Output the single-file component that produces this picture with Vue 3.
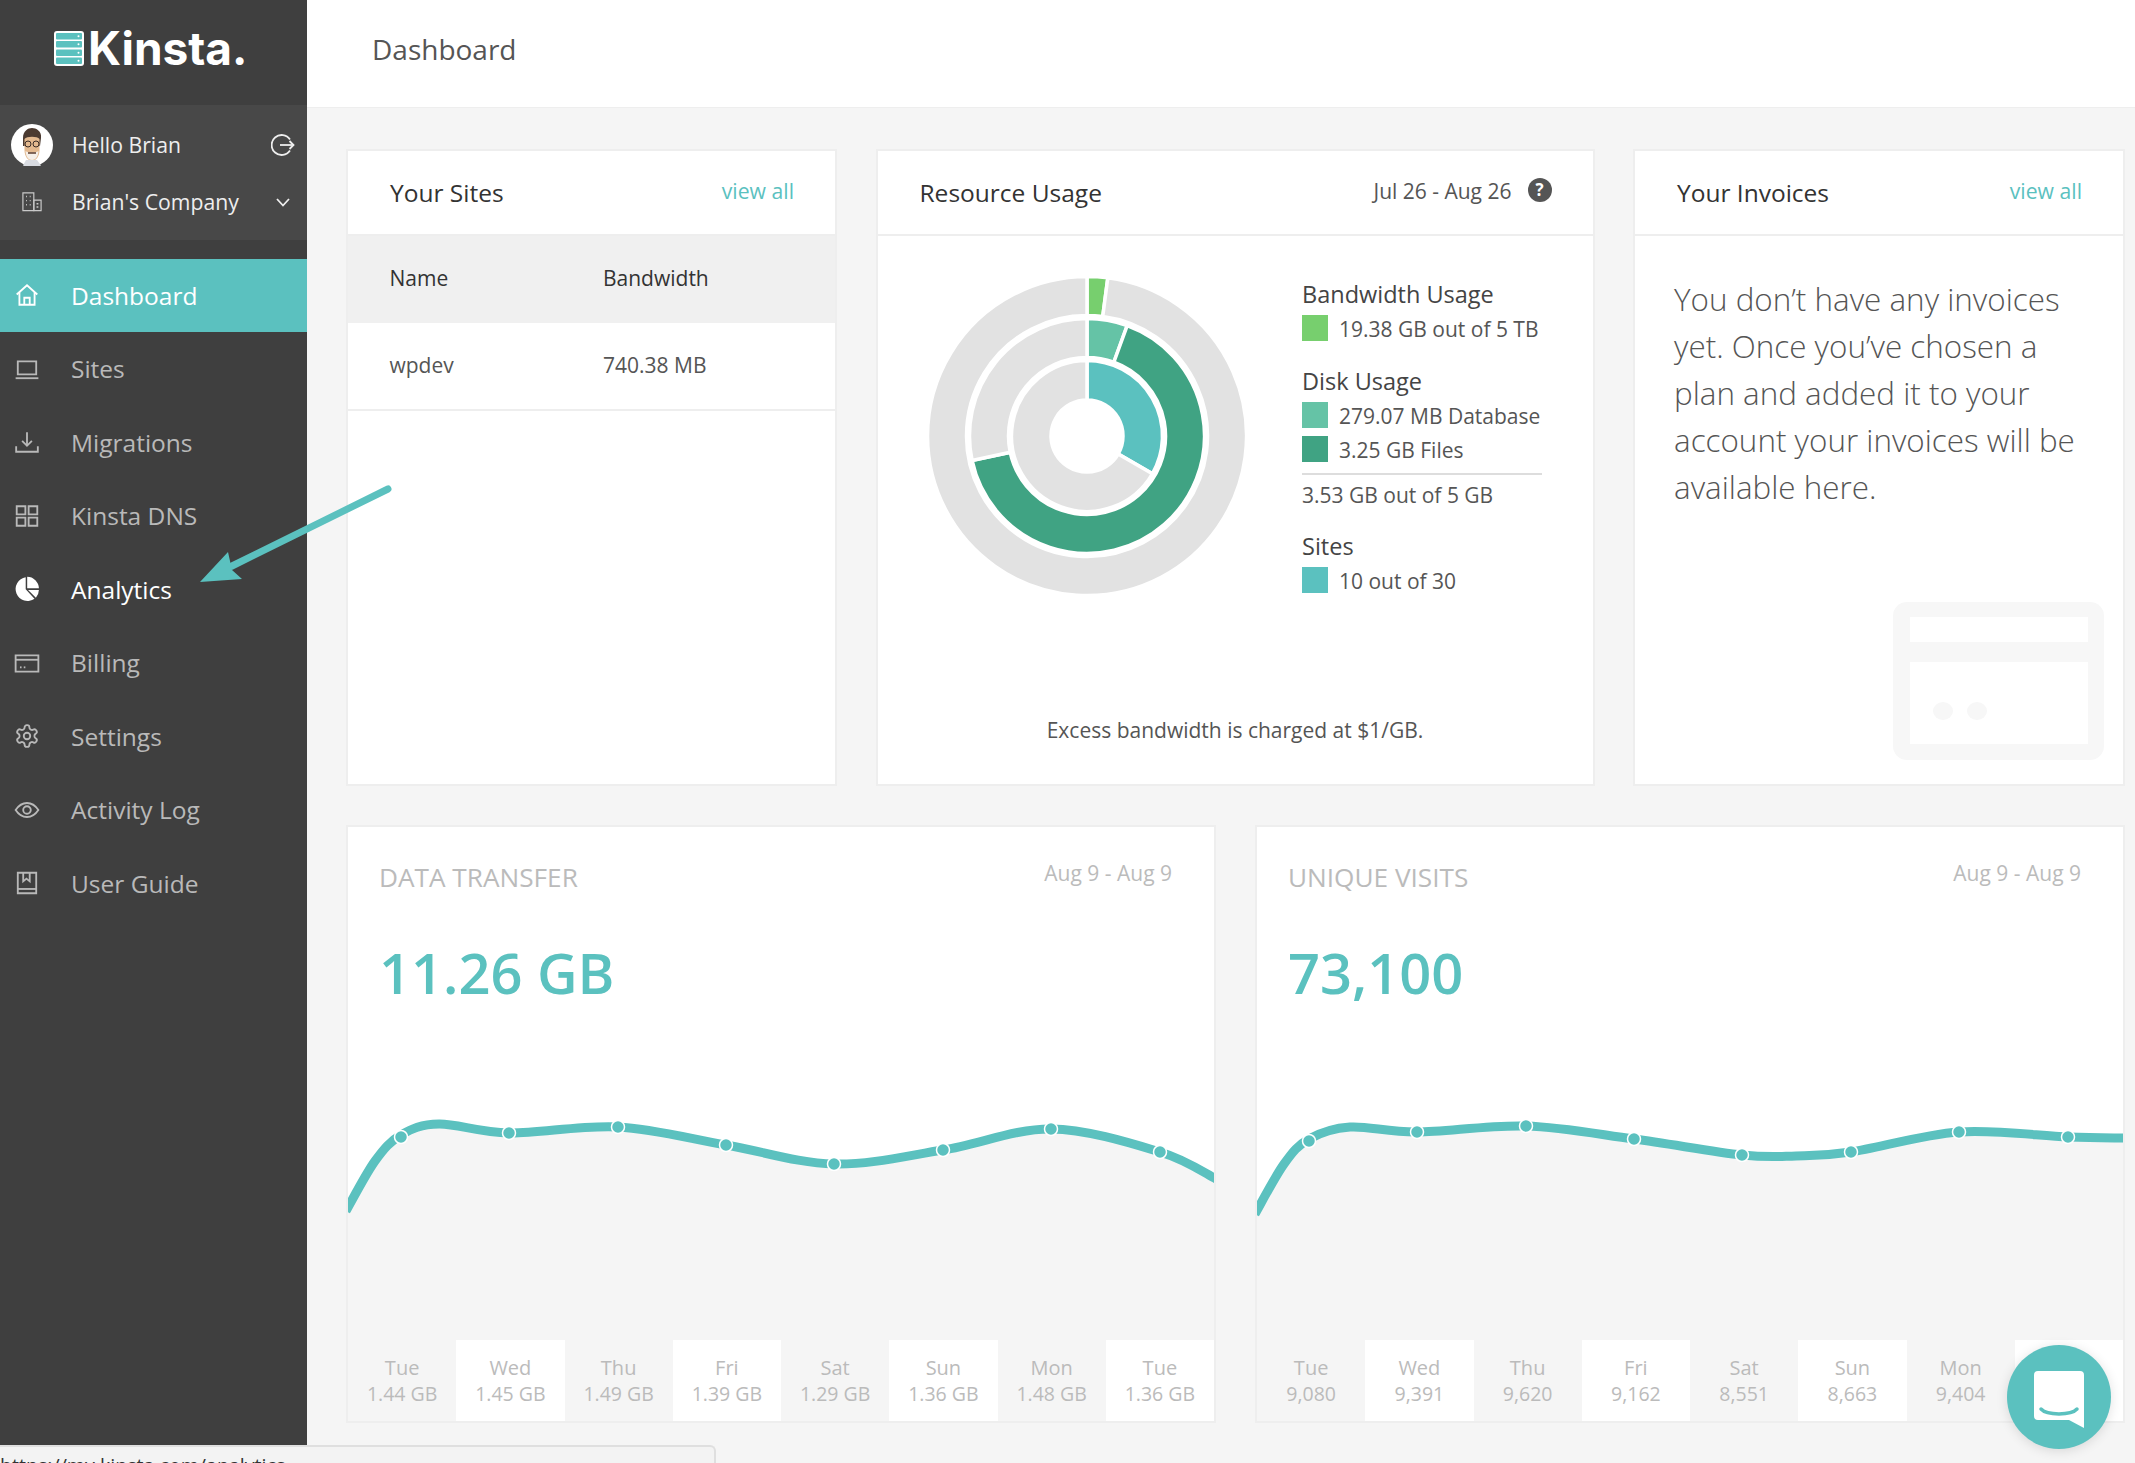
<script setup>
const navItems = [
  { label: 'Dashboard', active: true, paths: ['M2.5 11.5 12 3l9.5 8.5', 'M5 9.5V21h14V9.5', 'M9.5 21v-6.5h5V21'] },
  { label: 'Sites', paths: ['M3.5 5h17v12h-17z', 'M1.5 20.5h21'] },
  { label: 'Migrations', paths: ['M12 3v12', 'M7.5 11l4.5 4.5 4.5-4.5', 'M2 16v5h20v-5'] },
  { label: 'Kinsta DNS', paths: ['M2.5 3h8v7.5h-8z', 'M13.5 3h8v7.5h-8z', 'M2.5 13.5h8V21h-8z', 'M13.5 13.5h8V21h-8z'] },
  { label: 'Analytics', bright: true, solid: true, paths: ['M10.8 12.2V1.2A11 11 0 1 0 18.9 21L10.8 12.2z', 'M12.2 0.8A11 11 0 0 1 23 11.2H12.2z', 'M13 13h10A11 11 0 0 1 20.2 20z'] },
  { label: 'Billing', paths: ['M1.5 5h21v15h-21z', 'M1.5 9h21', 'M5.5 16h1.5', 'M9 16h1.5'] },
  { label: 'Settings', paths: ['M12.22 2h-.44a2 2 0 0 0-2 2v.18a2 2 0 0 1-1 1.73l-.43.25a2 2 0 0 1-2 0l-.15-.08a2 2 0 0 0-2.73.73l-.22.38a2 2 0 0 0 .73 2.73l.15.1a2 2 0 0 1 1 1.72v.51a2 2 0 0 1-1 1.74l-.15.09a2 2 0 0 0-.73 2.73l.22.38a2 2 0 0 0 2.73.73l.15-.08a2 2 0 0 1 2 0l.43.25a2 2 0 0 1 1 1.73V20a2 2 0 0 0 2 2h.44a2 2 0 0 0 2-2v-.18a2 2 0 0 1 1-1.73l.43-.25a2 2 0 0 1 2 0l.15.08a2 2 0 0 0 2.73-.73l.22-.39a2 2 0 0 0-.73-2.73l-.15-.08a2 2 0 0 1-1-1.74v-.5a2 2 0 0 1 1-1.74l.15-.09a2 2 0 0 0 .73-2.73l-.22-.38a2 2 0 0 0-2.73-.73l-.15.08a2 2 0 0 1-2 0l-.43-.25a2 2 0 0 1-1-1.73V4a2 2 0 0 0-2-2z', 'M15 12a3 3 0 1 1-6 0 3 3 0 0 1 6 0z'] },
  { label: 'Activity Log', paths: ['M1.5 12C4.5 7.5 8 5.5 12 5.5s7.5 2 10.5 6.5c-3 4.5-6.5 6.5-10.5 6.5S4.5 16.5 1.5 12z', 'M15.5 12a3.5 3.5 0 1 1-7 0 3.5 3.5 0 0 1 7 0z'] },
  { label: 'User Guide', paths: ['M3.5 2.5h17v19h-17z', 'M3.5 17.5h17', 'M8.5 2.5v8l3-2.5 3 2.5v-8'] },
]

// donut rings, angles in degrees clockwise from the top
const polar = (r, deg) => {
  const a = ((deg - 90) * Math.PI) / 180
  return `${(160 + r * Math.cos(a)).toFixed(2)} ${(160 + r * Math.sin(a)).toFixed(2)}`
}
const arc = (r0, r1, from, to) => {
  const large = to - from > 180 ? 1 : 0
  return `M${polar(r1, from)}A${r1} ${r1} 0 ${large} 1 ${polar(r1, to)}L${polar(r0, to)}A${r0} ${r0} 0 ${large} 0 ${polar(r0, from)}Z`
}
const donut = [
  { d: arc(120.5, 159.5, 0, 7.5), fill: '#77cf6e' },
  { d: arc(120.5, 159.5, 7.5, 360), fill: '#e2e2e2' },
  { d: arc(78.5, 117.5, 0, 20), fill: '#65c3a6' },
  { d: arc(78.5, 117.5, 20, 258), fill: '#40a383' },
  { d: arc(78.5, 117.5, 258, 360), fill: '#e2e2e2' },
  { d: arc(36, 75.5, 0, 120), fill: '#5bc1bf' },
  { d: arc(36, 75.5, 120, 360), fill: '#e2e2e2' },
]

// smooth line through the points (catmull-rom to bezier)
const spline = (pts) => {
  let d = `M${pts[0][0]} ${pts[0][1]}`
  for (let i = 0; i < pts.length - 1; i++) {
    const p0 = pts[i - 1] || pts[i]
    const p1 = pts[i]
    const p2 = pts[i + 1]
    const p3 = pts[i + 2] || p2
    const c1x = p1[0] + (p2[0] - p0[0]) / 6
    const c1y = p1[1] + (p2[1] - p0[1]) / 6
    const c2x = p2[0] - (p3[0] - p1[0]) / 6
    const c2y = p2[1] - (p3[1] - p1[1]) / 6
    d += `C${c1x.toFixed(1)} ${c1y.toFixed(1)} ${c2x.toFixed(1)} ${c2y.toFixed(1)} ${p2[0]} ${p2[1]}`
  }
  return d
}

const makeChart = (title, value, left, pts, dots, cells) => {
  const shift = pts.map(([x, y]) => [x - left, y - 1100])
  const line = spline(shift)
  return {
    title,
    value,
    line,
    area: `${line}L866 240L0 240Z`,
    dots: dots.map(([x, y]) => [x - left, y - 1100]),
    cells,
  }
}

const charts = [
  makeChart(
    'DATA TRANSFER',
    '11.26 GB',
    348,
    [[346, 1211], [375, 1161], [401, 1135], [439, 1124], [509, 1133], [618, 1127], [726, 1145], [834, 1164], [943, 1150], [1051, 1129], [1160, 1152], [1216, 1179]],
    [[401, 1137], [509, 1133], [618, 1127], [726, 1145], [834, 1164], [943, 1150], [1051, 1129], [1160, 1152]],
    [['Tue', '1.44 GB'], ['Wed', '1.45 GB'], ['Thu', '1.49 GB'], ['Fri', '1.39 GB'], ['Sat', '1.29 GB'], ['Sun', '1.36 GB'], ['Mon', '1.48 GB'], ['Tue', '1.36 GB']],
  ),
  makeChart(
    'UNIQUE VISITS',
    '73,100',
    1258,
    [[1256, 1214], [1285, 1164], [1310, 1139], [1351, 1127], [1418, 1132], [1527, 1126], [1635, 1139], [1743, 1155], [1797, 1156], [1852, 1152], [1960, 1132], [2069, 1137], [2126, 1138]],
    [[1310, 1141], [1418, 1132], [1527, 1126], [1635, 1139], [1743, 1155], [1852, 1152], [1960, 1132], [2069, 1137]],
    [['Tue', '9,080'], ['Wed', '9,391'], ['Thu', '9,620'], ['Fri', '9,162'], ['Sat', '8,551'], ['Sun', '8,663'], ['Mon', '9,404'], ['', '']],
  ),
]
</script>

<template>
  <div class="page">
    <aside class="sidebar">
      <div class="logo">
        <svg class="logo-mark" viewBox="0 0 30 35" width="30" height="35">
          <rect width="30" height="35" rx="3" fill="#fff" />
          <g fill="#5bc1bf">
            <rect x="2" y="2" width="26" height="6.5" rx="1" />
            <rect x="2" y="10" width="26" height="6.5" rx="1" />
            <rect x="2" y="18.5" width="26" height="6.5" rx="1" />
            <rect x="2" y="26.5" width="26" height="6.5" rx="1" />
          </g>
          <g fill="#fff">
            <circle cx="24.5" cy="5.2" r="1" />
            <circle cx="24.5" cy="13.2" r="1" />
            <circle cx="24.5" cy="21.7" r="1" />
            <circle cx="24.5" cy="29.7" r="1" />
          </g>
        </svg>
        <span class="logo-word">Kinsta.</span>
      </div>

      <div class="user-panel">
        <div class="user-row">
          <svg class="avatar" viewBox="0 0 42 42" width="42" height="42">
            <circle cx="21" cy="21" r="21" fill="#fff" />
            <path d="M12 14c0-7 5-10 9-10s10 3 9 10l-1 8-17 0z" fill="#4b3a30" />
            <path d="M13.5 15c2-3 13-3 15 0v11c0 7-4 11-7.5 11s-7.5-4-7.5-11z" fill="#e3b98f" />
            <path d="M14.5 27c3 2 10 2 13 0-.5 6-3 9-6.5 9s-6-3-6.5-9z" fill="#f5efe8" />
            <path d="M17 29h8" stroke="#5a3d30" stroke-width="1.5" />
            <g fill="none" stroke="#3a2c26" stroke-width="1">
              <circle cx="17" cy="20" r="3" />
              <circle cx="25" cy="20" r="3" />
            </g>
            <path d="M15 36l-3 5.5a21 21 0 0 0 18 0l-4-5.5z" fill="#d9dce2" />
          </svg>
          <span class="user-name">Hello Brian</span>
          <svg class="user-end" viewBox="0 0 24 24" width="24" height="24" fill="none" stroke="#eee" stroke-width="1.8">
            <path d="M19 6.5A10 10 0 1 0 19 17.5" />
            <path d="M9 12h13.5" />
            <path d="M18.5 8l4 4-4 4" />
          </svg>
        </div>
        <div class="user-row company">
          <svg class="building" viewBox="0 0 22 22" width="20" height="20" fill="none" stroke="#c9c9c9" stroke-width="1.3">
            <path d="M1 1h12v19.5H1z" />
            <path d="M13 9h8v11.5h-8z" />
            <path d="M4.5 5h1M8.5 5h1M4.5 9.5h1M8.5 9.5h1M4.5 14h1M8.5 14h1M16 13h2M16 16.5h2" stroke-width="1.6" />
          </svg>
          <span class="user-name">Brian's Company</span>
          <svg class="user-end" viewBox="0 0 24 24" width="24" height="24" fill="none" stroke="#eee" stroke-width="1.8">
            <path d="M6 9l6 6.5 6-6.5" />
          </svg>
        </div>
      </div>

      <nav class="nav">
        <a
          v-for="item in navItems"
          :key="item.label"
          class="nav-item"
          :class="{ active: item.active, bright: item.bright }"
        >
          <svg class="nav-icon" viewBox="0 0 24 24" width="26" height="26">
            <path
              v-for="d in item.paths"
              :key="d"
              :d="d"
              :fill="item.solid ? 'currentColor' : 'none'"
              :stroke="item.solid ? 'none' : 'currentColor'"
              stroke-width="1.7"
            />
          </svg>
          <span>{{ item.label }}</span>
        </a>
      </nav>
    </aside>

    <main class="main">
      <header class="topbar">Dashboard</header>

      <div class="content">
        <div class="row-top">
          <section class="card">
            <div class="card-head">
              <h2>Your Sites</h2>
              <a class="link">view all</a>
            </div>
            <div class="table-row table-head">
              <span>Name</span>
              <span>Bandwidth</span>
            </div>
            <div class="table-row table-body">
              <span>wpdev</span>
              <span>740.38 MB</span>
            </div>
          </section>

          <section class="card">
            <div class="card-head">
              <h2>Resource Usage</h2>
              <div class="head-right">
                <span class="range">Jul 26 - Aug 26</span>
                <span class="help">?</span>
              </div>
            </div>
            <div class="usage">
              <svg class="donut" viewBox="0 0 320 320" width="320" height="320">
                <path v-for="seg in donut" :key="seg.d" :d="seg.d" :fill="seg.fill" stroke="#fff" stroke-width="3.5" />
              </svg>
              <div class="legend">
                <h3>Bandwidth Usage</h3>
                <div class="legend-row"><i class="swatch c-lime"></i>19.38 GB out of 5 TB</div>
                <h3 class="gap">Disk Usage</h3>
                <div class="legend-row"><i class="swatch c-mint"></i>279.07 MB Database</div>
                <div class="legend-row next"><i class="swatch c-green"></i>3.25 GB Files</div>
                <div class="legend-total">3.53 GB out of 5 GB</div>
                <h3 class="gap-sites">Sites</h3>
                <div class="legend-row"><i class="swatch c-teal"></i>10 out of 30</div>
              </div>
            </div>
            <p class="excess">Excess bandwidth is charged at $1/GB.</p>
          </section>

          <section class="card">
            <div class="card-head">
              <h2>Your Invoices</h2>
              <a class="link">view all</a>
            </div>
            <p class="invoice-text">You don’t have any invoices yet. Once you’ve chosen a plan and added it to your account your invoices will be available here.</p>
            <svg class="ghost" viewBox="0 0 211 158" width="211" height="158">
              <rect width="211" height="158" rx="14" fill="#f7f7f7" />
              <rect x="17" y="15" width="178" height="25" fill="#fff" />
              <rect x="17" y="60" width="178" height="82" fill="#fff" />
              <ellipse cx="50" cy="109" rx="10" ry="9" fill="#f7f7f7" />
              <ellipse cx="84" cy="109" rx="10" ry="9" fill="#f7f7f7" />
            </svg>
          </section>
        </div>

        <div class="row-bottom">
          <section v-for="chart in charts" :key="chart.title" class="card chart-card">
            <div class="chart-head">
              <h2>{{ chart.title }}</h2>
              <span>Aug 9 - Aug 9</span>
            </div>
            <div class="chart-value">{{ chart.value }}</div>
            <svg class="chart-line" viewBox="0 0 866 240" preserveAspectRatio="none">
              <path :d="chart.area" fill="#f5f5f5" />
              <path :d="chart.line" fill="none" stroke="#5bc1bf" stroke-width="9" />
              <circle
                v-for="dot in chart.dots"
                :key="dot[0]"
                :cx="dot[0]"
                :cy="dot[1]"
                r="6.5"
                fill="#5bc1bf"
                stroke="#fff"
                stroke-width="1.5"
              />
            </svg>
            <div class="chart-cells">
              <div v-for="(cell, i) in chart.cells" :key="i" class="cell">
                <span>{{ cell[0] }}</span>
                <span class="cell-value">{{ cell[1] }}</span>
              </div>
            </div>
          </section>
        </div>
      </div>
    </main>

    <svg class="arrow" viewBox="0 0 200 110" width="200" height="110">
      <path d="M193 9 37 86" stroke="#5bc1bf" stroke-width="7" stroke-linecap="round" fill="none" />
      <path d="M5 102 33 72l4 18 10 9z" fill="#5bc1bf" />
    </svg>

    <div class="chat">
      <svg viewBox="0 0 50 57" width="50" height="57">
        <path d="M4 0h42a4 4 0 0 1 4 4v53L35 49H4a4 4 0 0 1-4-4V4a4 4 0 0 1 4-4z" fill="#fff" />
        <path d="M7 38c6 6.5 30 6.5 36 0" fill="none" stroke="#5bc1bf" stroke-width="3.5" stroke-linecap="round" />
      </svg>
    </div>

    <div class="status-bar">https://my.kinsta.com/analytics</div>
  </div>
</template>

<style>
html,
body {
  margin: 0;
  background: #f5f5f5;
}
</style>

<style scoped>
* {
  box-sizing: border-box;
}

.page {
  position: relative;
  display: flex;
  width: 2135px;
  height: 1463px;
  overflow: hidden;
  background: #f5f5f5;
  font-family: 'Open Sans', 'Liberation Sans', sans-serif;
  color: #555;
}

/* sidebar */
.sidebar {
  width: 307px;
  height: 1445px;
  flex-shrink: 0;
  background: #3f3f3f;
}

.logo {
  display: flex;
  align-items: center;
  height: 105px;
  padding: 0 0 9px 54px;
  gap: 4px;
}

.logo-word {
  font-family: Inter, 'Open Sans', sans-serif;
  font-size: 46px;
  font-weight: 700;
  letter-spacing: 0;
  color: #fff;
  line-height: 1;
}

.user-panel {
  height: 135px;
  padding-top: 11px;
  background: #484848;
}

.user-row {
  position: relative;
  display: flex;
  align-items: center;
  height: 57px;
  padding-left: 11px;
}

.company {
  padding-left: 22px;
}

.avatar {
  flex-shrink: 0;
  margin-right: 19px;
}

.building {
  flex-shrink: 0;
  margin-right: 30px;
}

.user-name {
  font-size: 21.2px;
  color: #eee;
}

.user-end {
  position: absolute;
  right: 12px;
  top: 17px;
}

.nav {
  margin-top: 18.5px;
}

.nav-item {
  display: flex;
  align-items: center;
  height: 73.5px;
  padding-left: 14px;
  font-size: 24.5px;
  color: #b9b9b9;
}

.nav-icon {
  margin-right: 31px;
  flex-shrink: 0;
}

.nav-item.active {
  background: #5bc1bf;
  color: #fff;
}

.nav-item.bright {
  color: #fff;
}

/* main */
.main {
  flex: 1;
  min-width: 0;
}

.topbar {
  display: flex;
  align-items: center;
  height: 108px;
  padding-left: 65px;
  padding-bottom: 10px;
  background: #fff;
  border-bottom: 1px solid #eee;
  font-size: 28px;
  color: #555;
}

.content {
  padding: 41px 10px 0 39px;
}

.row-top {
  display: grid;
  grid-template-columns: 491px 719px 492px;
  gap: 38.5px;
  height: 637px;
}

.row-bottom {
  display: grid;
  grid-template-columns: 870px 870px;
  gap: 39px;
  height: 598px;
  margin-top: 39px;
}

.card {
  position: relative;
  display: flex;
  flex-direction: column;
  background: #fff;
  border: 2px solid #eee;
  min-width: 0;
}

.card-head {
  display: flex;
  justify-content: space-between;
  align-items: center;
  height: 85px;
  padding: 0 41px 0 42px;
  border-bottom: 2px solid #eee;
  flex-shrink: 0;
}

.card-head h2 {
  margin: 0;
  font-size: 24.5px;
  font-weight: 400;
  color: #333;
}

.link {
  font-size: 21.2px;
  color: #5bc1bf;
  margin-top: -4px;
}

.table-row {
  display: grid;
  grid-template-columns: 213.5px 1fr;
  align-items: center;
  padding: 0 0 3px 41.5px;
  font-size: 21px;
}

.table-head {
  height: 87px;
  background: #f0f0f0;
  color: #333;
}

.table-body {
  height: 88px;
  border-bottom: 2px solid #eee;
  color: #555;
}

/* resource usage */
.head-right {
  display: flex;
  align-items: center;
  gap: 16px;
}

.range {
  margin-top: -3px;
  font-size: 21px;
  color: #555;
}

.help {
  display: flex;
  align-items: center;
  justify-content: center;
  width: 24px;
  height: 24px;
  margin-top: -6px;
  border-radius: 50%;
  background: #555;
  color: #fff;
  font-size: 17px;
  font-weight: 700;
}

.usage {
  display: flex;
  align-items: flex-start;
  padding: 40px 0 0 49.5px;
  gap: 55px;
}

.donut {
  flex-shrink: 0;
}

.legend {
  width: 240px;
  padding-top: 4px;
  font-size: 21px;
}

.legend h3 {
  margin: 0;
  height: 28px;
  line-height: 28px;
  font-size: 23.5px;
  font-weight: 400;
  color: #444;
}

.legend h3.gap {
  margin-top: 26px;
}

.legend h3.gap-sites {
  margin-top: 22.5px;
}

.legend-row {
  display: flex;
  align-items: flex-start;
  gap: 11px;
  height: 26px;
  margin-top: 7px;
  line-height: 28px;
  white-space: nowrap;
}

.legend-row.next {
  margin-top: 8px;
}

.swatch {
  width: 26px;
  height: 26px;
  flex-shrink: 0;
}

.c-lime {
  background: #77cf6e;
}

.c-mint {
  background: #65c3a6;
}

.c-green {
  background: #40a383;
}

.c-teal {
  background: #5bc1bf;
}

.legend-total {
  margin-top: 11px;
  padding-top: 6px;
  line-height: 28px;
  border-top: 2px solid #ddd;
}

.excess {
  margin: auto 0 0;
  padding-bottom: 40px;
  text-align: center;
  font-size: 21px;
  line-height: 28px;
}

/* invoices */
.invoice-text {
  margin: 0;
  padding: 39px 30px 0 39px;
  font-size: 31.4px;
  font-weight: 300;
  line-height: 47px;
  color: #555;
}

.ghost {
  position: absolute;
  right: 19px;
  bottom: 24px;
}

/* charts */
.chart-card {
  overflow: hidden;
}

.chart-head {
  display: flex;
  justify-content: space-between;
  align-items: flex-start;
  padding: 32px 42px 0 31px;
}

.chart-head h2 {
  margin: 0;
  font-size: 26.2px;
  font-weight: 400;
  line-height: 36px;
  color: #bbb;
}

.chart-head span {
  font-size: 21px;
  line-height: 28px;
  color: #bbb;
}

.chart-value {
  padding: 42px 0 0 31px;
  font-size: 56px;
  font-weight: 600;
  line-height: 70px;
  color: #5bc1bf;
}

.chart-line {
  display: block;
  width: 100%;
  height: 240px;
  margin-top: auto;
  flex-shrink: 0;
}

.chart-cells {
  display: grid;
  grid-template-columns: repeat(8, 1fr);
  height: 81px;
  flex-shrink: 0;
  background: #f5f5f5;
}

.cell {
  display: flex;
  flex-direction: column;
  align-items: center;
  padding-top: 15px;
  font-size: 20px;
  line-height: 26px;
  color: #bbb;
}

.cell-value {
  font-size: 19.5px;
}

.cell:nth-child(even) {
  background: #fff;
}

/* overlays */
.arrow {
  position: absolute;
  left: 195px;
  top: 480px;
}

.chat {
  position: absolute;
  left: 2007px;
  top: 1345px;
  display: flex;
  align-items: center;
  justify-content: center;
  width: 104px;
  height: 104px;
  padding-top: 5px;
  border-radius: 50%;
  background: #5bc1bf;
  box-shadow: 0 2px 12px rgba(0, 0, 0, 0.12);
}

.status-bar {
  position: absolute;
  left: 0;
  bottom: 0;
  width: 716px;
  height: 18px;
  padding-top: 7px;
  overflow: hidden;
  background: #f3f3f3;
  border: 2px solid #dfdfdf;
  border-left: 0;
  border-bottom: 0;
  border-top-right-radius: 6px;
  font-size: 19.6px;
  line-height: 24px;
  color: #333;
}
</style>
